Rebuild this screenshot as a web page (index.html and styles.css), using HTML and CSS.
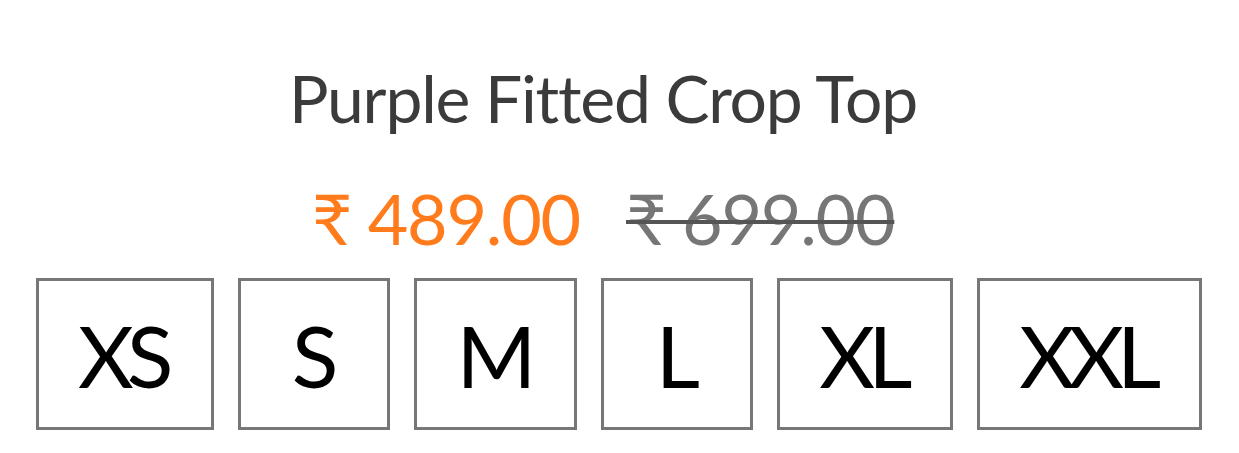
FILE: index.html
```html
<!DOCTYPE html>
<html>
<head>
<meta charset="utf-8">
<link rel="stylesheet" href="styles.css">
</head>
<body>
<div class="product">
  <h1 class="title">Purple Fitted Crop Top</h1>
  <div class="prices">
    <span class="price-now">₹ 489.00</span>
    <span class="price-old">₹ 699.00</span>
  </div>
  <div class="sizes">
    <button class="size">XS</button>
    <button class="size">S</button>
    <button class="size">M</button>
    <button class="size">L</button>
    <button class="size">XL</button>
    <button class="size">XXL</button>
  </div>
</div>
</body>
</html>
```
FILE: styles.css
```css
html, body {
  margin: 0;
  padding: 0;
  background: #ffffff;
}
.product {
  width: 1206px;
  font-family: "Lato", "Noto Sans", sans-serif;
  display: flex;
  flex-direction: column;
  align-items: center;
  padding-top: 58px;
}
.title {
  margin: 0;
  font-weight: 400;
  font-size: 66px;
  line-height: 79px;
  letter-spacing: -1.2px;
  color: #3b3b3b;
}
.prices {
  display: flex;
  gap: 46px;
  margin-top: 39px;
  font-size: 70px;
  line-height: 84px;
  letter-spacing: -1.2px;
}
.price-now {
  color: #ff7b1c;
}
.price-old {
  color: #767676;
  text-decoration: line-through;
  text-decoration-color: #555;
  text-decoration-thickness: 4px;
}
.sizes {
  align-self: flex-start;
  margin-left: 36px;
  margin-top: 18px;
  display: flex;
  gap: 24px;
}
.size {
  flex-shrink: 0;
  min-width: 152px;
  height: 152px;
  padding: 0 45px 0 39px;
  border: 3px solid #777;
  background: #fff;
  font-family: "Lato", "Noto Sans", sans-serif;
  font-size: 86px;
  letter-spacing: -7px;
  color: #000;
  box-sizing: border-box;
  display: flex;
  align-items: center;
  justify-content: center;
}
```
